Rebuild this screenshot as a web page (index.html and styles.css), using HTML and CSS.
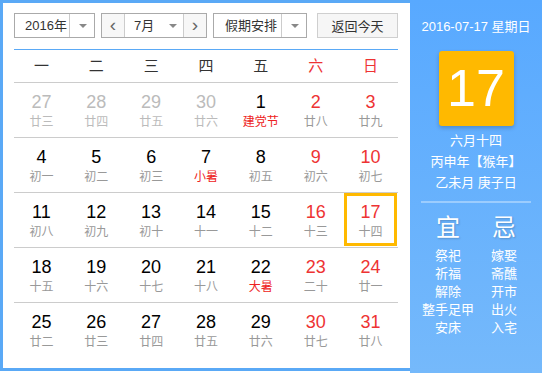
FILE: index.html
```html
<!DOCTYPE html>
<html lang="zh-CN">
<head>
<meta charset="UTF-8">
<link rel="stylesheet" href="styles.css">
<title>万年历</title>
</head>
<body>
<div class="calendar">
  <div class="main">
    <div class="toolbar">
      <div class="select year-select">
        <span class="select-text">2016年</span>
        <span class="select-arrow"></span>
      </div>
      <div class="select month-select">
        <span class="nav-btn">&lsaquo;</span>
        <span class="select-text">7月</span>
        <span class="select-arrow inner"></span>
        <span class="nav-btn next">&rsaquo;</span>
      </div>
      <div class="select holiday-select">
        <span class="select-text">假期安排</span>
        <span class="select-arrow"></span>
      </div>
      <button class="today-btn">返回今天</button>
    </div>

    <div class="weekdays">
      <div>一</div><div>二</div><div>三</div><div>四</div><div>五</div>
      <div class="weekend">六</div><div class="weekend">日</div>
    </div>

    <div class="days">
      <div class="week">
        <div class="day other"><b>27</b><span>廿三</span></div>
        <div class="day other"><b>28</b><span>廿四</span></div>
        <div class="day other"><b>29</b><span>廿五</span></div>
        <div class="day other"><b>30</b><span>廿六</span></div>
        <div class="day"><b>1</b><span class="fest">建党节</span></div>
        <div class="day weekend"><b>2</b><span>廿八</span></div>
        <div class="day weekend"><b>3</b><span>廿九</span></div>
      </div>
      <div class="week">
        <div class="day"><b>4</b><span>初一</span></div>
        <div class="day"><b>5</b><span>初二</span></div>
        <div class="day"><b>6</b><span>初三</span></div>
        <div class="day"><b>7</b><span class="fest">小暑</span></div>
        <div class="day"><b>8</b><span>初五</span></div>
        <div class="day weekend"><b>9</b><span>初六</span></div>
        <div class="day weekend"><b>10</b><span>初七</span></div>
      </div>
      <div class="week">
        <div class="day"><b>11</b><span>初八</span></div>
        <div class="day"><b>12</b><span>初九</span></div>
        <div class="day"><b>13</b><span>初十</span></div>
        <div class="day"><b>14</b><span>十一</span></div>
        <div class="day"><b>15</b><span>十二</span></div>
        <div class="day weekend"><b>16</b><span>十三</span></div>
        <div class="day weekend today"><b>17</b><span>十四</span></div>
      </div>
      <div class="week">
        <div class="day"><b>18</b><span>十五</span></div>
        <div class="day"><b>19</b><span>十六</span></div>
        <div class="day"><b>20</b><span>十七</span></div>
        <div class="day"><b>21</b><span>十八</span></div>
        <div class="day"><b>22</b><span class="fest">大暑</span></div>
        <div class="day weekend"><b>23</b><span>二十</span></div>
        <div class="day weekend"><b>24</b><span>廿一</span></div>
      </div>
      <div class="week">
        <div class="day"><b>25</b><span>廿二</span></div>
        <div class="day"><b>26</b><span>廿三</span></div>
        <div class="day"><b>27</b><span>廿四</span></div>
        <div class="day"><b>28</b><span>廿五</span></div>
        <div class="day"><b>29</b><span>廿六</span></div>
        <div class="day weekend"><b>30</b><span>廿七</span></div>
        <div class="day weekend"><b>31</b><span>廿八</span></div>
      </div>
    </div>
  </div>

  <div class="side">
    <div class="side-date">2016-07-17 星期日</div>
    <div class="big-day">17</div>
    <div class="lunar">
      <div>六月十四</div>
      <div>丙申年【猴年】</div>
      <div>乙未月 庚子日</div>
    </div>
    <div class="divider"></div>
    <div class="yiji">
      <div class="yiji-col">
        <div class="yiji-title">宜</div>
        <div>祭祀</div>
        <div>祈福</div>
        <div>解除</div>
        <div>整手足甲</div>
        <div>安床</div>
      </div>
      <div class="yiji-col">
        <div class="yiji-title">忌</div>
        <div>嫁娶</div>
        <div>斋醮</div>
        <div>开市</div>
        <div>出火</div>
        <div>入宅</div>
      </div>
    </div>
  </div>
</div>
</body>
</html>
```

FILE: styles.css
```css
body {
margin: 0;
font-family: "Liberation Sans", "Noto Sans CJK SC", sans-serif;
background: #fff;
}
.calendar {
display: flex;
width: 542px;
height: 373px;
}
/* 左侧日历 */
.main {
width: 396px;
height: 348px;
padding: 10px 12px 7px 11px;
border: 3px solid #5aa9f6;
border-right: none;
background: #fff;
}
.toolbar {
display: flex;
height: 25px;
font-size: 13px;
color: #333;
}
.select {
display: flex;
align-items: center;
height: 23px;
border: 1px solid #aaa;
background: #fff;
}
.select-text {
flex: 1;
padding-left: 10px;
line-height: 23px;
}
.select-arrow {
position: relative;
width: 24px;
height: 23px;
border-left: 1px solid #ccc;
}
.select-arrow::after {
content: "";
position: absolute;
left: 9px;
top: 10px;
border-left: 4px solid transparent;
border-right: 4px solid transparent;
border-top: 4px solid #888;
}
.select-arrow.inner {
border-left: none;
width: 14px;
}
.select-arrow.inner::after {
left: 0;
}
.year-select {
width: 79px;
}
.month-select {
width: 104px;
margin-left: 6px;
}
.month-select .select-text {
padding-left: 9px;
}
.nav-btn {
width: 22px;
height: 23px;
line-height: 21px;
text-align: center;
font-size: 19px;
color: #666;
background: #f7f7f7;
border-right: 1px solid #ccc;
}
.nav-btn.next {
border-right: none;
border-left: 1px solid #ccc;
}
.holiday-select {
width: 92px;
margin-left: 6px;
}
.holiday-select .select-text {
padding-left: 11px;
}
.today-btn {
width: 81px;
height: 25px;
margin-left: 10px;
padding: 0;
border: 1px solid #cfcfcf;
background: #f6f6f6;
font-family: inherit;
font-size: 13px;
color: #333;
cursor: pointer;
}
.weekdays {
display: grid;
grid-template-columns: repeat(7, 1fr);
margin-top: 11px;
height: 32px;
line-height: 32px;
border-top: 1px solid #5aa9f6;
border-bottom: 1px solid #ccc;
text-align: center;
font-size: 15px;
color: #333;
}
.weekdays .weekend {
color: #e33;
}
.week {
display: grid;
grid-template-columns: repeat(7, 1fr);
height: 54px;
border-bottom: 1px solid #ccc;
}
.week:last-child {
border-bottom: none;
}
.day {
display: flex;
flex-direction: column;
align-items: center;
padding-top: 9px;
cursor: pointer;
}
.day b {
font-weight: normal;
font-size: 18px;
line-height: 20px;
color: #000;
}
.day span {
font-size: 12px;
line-height: 20px;
color: #999;
}
.day.weekend b {
color: #e33;
}
.day.other b,
.day.other span {
color: #bbb;
}
.day span.fest {
color: #e22;
}
.day.today {
margin: 0 1px 1px;
padding-top: 9px;
box-shadow: inset 0 0 0 3px #ffb900;
}
/* 右侧信息 */
.side {
flex: 1;
padding-top: 18px;
text-align: center;
color: #fff;
background: linear-gradient(#58a9ff, #75b9fb);
}
.side-date {
font-size: 13px;
line-height: 18px;
}
.big-day {
width: 75px;
height: 75px;
margin: 15px auto 0;
border-radius: 3px;
background: #ffb900;
box-shadow: 0 2px 4px rgba(0, 0, 0, 0.2);
font-size: 52px;
line-height: 75px;
}
.lunar {
margin-top: 4px;
font-size: 13px;
line-height: 21px;
}
.divider {
width: 110px;
height: 2px;
margin: 8px auto 0;
background: rgba(255, 255, 255, 0.35);
}
.yiji {
display: grid;
grid-template-columns: 56px 56px;
padding: 0 10px;
margin-top: 10px;
}
.yiji-col {
font-size: 13px;
line-height: 18px;
}
.yiji-title {
font-size: 24px;
line-height: 30px;
margin-bottom: 4px;
text-shadow: 1px 1px 2px rgba(0, 0, 0, 0.2);
}
```
